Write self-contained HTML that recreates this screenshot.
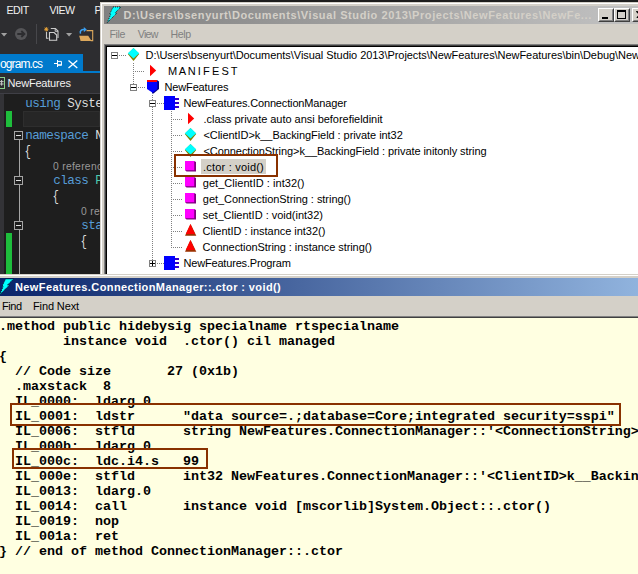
<!DOCTYPE html>
<html>
<head>
<meta charset="utf-8">
<title>ILDASM</title>
<style>
html,body{margin:0;padding:0;}
body{width:638px;height:574px;overflow:hidden;position:relative;background:#1e1e1e;font-family:"Liberation Sans",sans-serif;}
.abs{position:absolute;}
/* ---------- Visual Studio (left/top) ---------- */
#vs{position:absolute;left:0;top:0;width:100px;height:274px;background:#2d2d30;overflow:hidden;}
#vs .menu{position:absolute;top:2px;height:16px;line-height:16px;font-size:10.6px;letter-spacing:-0.5px;color:#f1f1f1;white-space:nowrap;}
#vs .tab{position:absolute;left:0;top:54px;width:83px;height:18px;background:#007acc;}
#vs .tabline{position:absolute;left:0;top:71px;width:100px;height:2px;background:#007acc;}
#vs .tabtxt{position:absolute;left:0px;top:55.5px;height:16px;line-height:16px;font-size:12px;letter-spacing:-0.9px;color:#fff;white-space:nowrap;}
#vs .nav{position:absolute;left:0;top:73px;width:100px;height:20px;background:#2d2d30;}
#vs .navtxt{position:absolute;left:7.5px;top:75px;height:16px;line-height:16px;font-size:11px;letter-spacing:-0.2px;color:#f1f1f1;white-space:nowrap;}
#vs .ed{position:absolute;left:4px;top:94px;width:96px;height:180px;background:#1e1e1e;}
#vs .margin{position:absolute;left:0;top:94px;width:4px;height:180px;background:#333337;}
#vs .sep{position:absolute;left:0;top:93px;width:100px;height:1px;background:#3f3f46;}
.code{position:absolute;font-family:"Liberation Mono",monospace;font-size:12.6px;letter-spacing:-0.56px;line-height:16px;height:16px;white-space:pre;color:#dcdcdc;}
.kw{color:#569cd6;}
.br{display:inline-block;transform:translate(-0.7px,0.9px) scale(0.85,1.1);transform-origin:30% 75%;}
.ty{color:#4ec9b0;}
.lens{position:absolute;letter-spacing:0.3px;font-size:10.3px;line-height:13px;height:13px;color:#999;white-space:pre;}
.green{position:absolute;left:6px;width:6px;background:#1ebe3c;}
.fold{position:absolute;left:14px;width:7px;height:7px;border:1px solid #a5a5a5;background:#1e1e1e;}
.fold:after{content:"";position:absolute;left:1px;top:3px;width:5px;height:1px;background:#e0e0e0;}
.fline{position:absolute;left:19px;width:1px;background:#a5a5a5;}
/* ---------- ILDASM main window ---------- */
#ild{position:absolute;left:100px;top:2px;width:540px;height:272px;background:#d4d0c8;overflow:hidden;}
#ild .b1{position:absolute;left:1px;top:1px;width:540px;height:1px;background:#fff;}
#ild .b2{position:absolute;left:1px;top:1px;width:1px;height:272px;background:#fff;}
#ild .title{position:absolute;left:4px;top:4px;width:536px;height:18px;background:linear-gradient(to right,#808080 0,#c0c0c0 515px);}
#ild .ttxt{position:absolute;left:23.5px;top:5px;height:16px;line-height:16px;font-size:11px;letter-spacing:0.59px;font-weight:bold;color:#d4d0c8;white-space:nowrap;}
#ild .mtxt{position:absolute;top:24px;height:16px;line-height:16px;font-size:10.6px;color:#808080;white-space:nowrap;}
#tree{position:absolute;left:4px;top:42px;width:540px;height:232px;background:#fff;border-left:1px solid #808080;border-top:1px solid #808080;}
#tree .in{position:absolute;left:0;top:0;width:540px;height:232px;border-left:1px solid #404040;border-top:1px solid #404040;}
#tree .in2{position:absolute;left:0;top:0;width:540px;height:232px;border-left:1px solid #000;border-top:1px solid #000;}
.row{position:absolute;font-size:11px;line-height:16px;height:16px;white-space:nowrap;color:#000;}
.wbtn{position:absolute;top:6px;width:16px;height:14px;background:#d4d0c8;box-sizing:border-box;border:1px solid;border-color:#fff #404040 #404040 #fff;}
.wbtn i{position:absolute;left:0;top:0;right:0;bottom:0;border:1px solid;border-color:#d4d0c8 #808080 #808080 #d4d0c8;}
/* ---------- IL method window ---------- */
#ilw{position:absolute;left:0;top:274px;width:638px;height:300px;background:#d4d0c8;overflow:hidden;}
#ilw .title{position:absolute;left:0;top:4px;width:740px;height:18px;background:linear-gradient(to right,#0a246a,#a6caf0);}
#ilw .ttxt{position:absolute;left:15px;top:5px;height:16px;line-height:16px;font-size:11px;letter-spacing:0.4px;font-weight:bold;color:#fff;white-space:nowrap;}
#ilw .mtxt{position:absolute;top:24px;height:16px;line-height:16px;font-size:11px;color:#000;white-space:nowrap;}
#ilt{position:absolute;left:0;top:44px;width:638px;height:256px;background:#ffffe1;}
#ilt pre{position:absolute;left:-1px;top:1px;margin:0;font-family:"Liberation Mono",monospace;font-weight:bold;font-size:13.33px;line-height:15px;color:#000;white-space:pre;}
.hl{position:absolute;box-sizing:border-box;border:2px solid #893100;}
</style>
</head>
<body>
<!-- Visual Studio -->
<div id="vs">
  <div class="menu" style="left:6.5px">EDIT</div>
  <div class="menu" style="left:49.5px">VIEW</div>
  <div class="menu" style="left:94.6px">P</div>
  <svg class="abs" style="left:0;top:22px" width="100" height="26" viewBox="0 22 100 26">
    <polygon points="1,33 7.2,33 4.1,36.4" fill="#a0a0a0"/>
    <circle cx="21.1" cy="34" r="6.1" fill="#555558"/>
    <path d="M17.3 34h6.2M21.3 31l3.1 3l-3.1 3" fill="none" stroke="#2d2d30" stroke-width="1.9"/>
    <rect x="36" y="24" width="1" height="20" fill="#47474b"/>
    <!-- new item icon -->
    <path d="M46.3 27v4.6M44.2 29.3h4.2M44.8 27.7l3 3.2M47.8 27.7l-3 3.2" stroke="#f0a93a" stroke-width="0.9" fill="none"/>
    <path d="M50.8 28.5h4.6l2.6 2.6v7" fill="none" stroke="#c8c8c8" stroke-width="1.1"/>
    <path d="M55.2 28.5v2.8h2.8" fill="none" stroke="#c8c8c8" stroke-width="1"/>
    <path d="M46.5 32v6.2h2" fill="none" stroke="#c8c8c8" stroke-width="1.1"/>
    <path d="M49.5 32.5h4.6l2.6 2.6v5.2h-7.2z" fill="#2a2a2d" stroke="#d0d0d0" stroke-width="1.1"/>
    <polygon points="66,33 72.2,33 69.1,36.4" fill="#a0a0a0"/>
    <!-- open folder icon -->
    <path d="M86.5 30.6h6.2v10h-2" fill="none" stroke="#dca85c" stroke-width="1.1"/>
    <polygon points="79.2,35.8 88.2,35.8 91.6,40.9 80.6,40.9" fill="#dca85c"/>
    <path d="M80.6 33.6c-1.2-2.4 0.6-4.2 3.8-4" fill="none" stroke="#3a9ff0" stroke-width="1.5"/>
    <polygon points="83.8,27 86.8,29.6 83.8,32.2" fill="#3a9ff0"/>
  </svg>
  <div class="tab"></div><div class="tabline"></div>
  <div class="tabtxt">ogram.cs</div>
  <div class="nav"></div>
  <div class="navtxt">NewFeatures</div>
  <svg class="abs" style="left:48px;top:54px" width="40" height="20" viewBox="48 54 40 20">
    <path d="M54 63.5h3.5M57.5 60v7M58 61.4h3.4v3.6h-3.4" fill="none" stroke="#fff" stroke-width="1"/>
    <rect x="58" y="64.4" width="3.9" height="1.2" fill="#fff"/>
    <path d="M68.5 60.4l8.8 7.6M77.3 60.4l-8.8 7.6" fill="none" stroke="#fff" stroke-width="1.3"/>
  </svg>
  <div class="abs" style="left:-9px;top:77px;width:12px;height:10px;border:1px solid #8cd08c;box-sizing:content-box"></div>
  <svg class="abs" style="left:0;top:78px" width="4" height="10" viewBox="0 78 4 10"><path d="M1.6 80v5.6M-1 81.6h4.6M-1 84h4.6" stroke="#c8c8c8" stroke-width="1" fill="none"/></svg>
  <div class="sep"></div>
  <div class="margin"></div>
  <div class="ed"></div>
  <div class="abs" style="left:23px;top:111px;width:77px;height:16px;background:#262626;box-sizing:border-box;border:1px solid #2e2e2e;"></div>
  <div class="code" style="left:25.2px;top:96px"><span class="kw">using</span> System</div>
  <div class="code" style="left:25.2px;top:128.3px"><span class="kw">namespace</span> N</div>
  <div class="code" style="left:25.2px;top:144px"><span class="br">{</span></div>
  <div class="lens" style="left:53px;top:159.6px">0 references</div>
  <div class="code" style="left:53.2px;top:173.2px"><span class="kw">class</span> <span class="ty">P</span></div>
  <div class="code" style="left:53.2px;top:189px"><span class="br">{</span></div>
  <div class="lens" style="left:81px;top:204.6px">0 references</div>
  <div class="code" style="left:81.2px;top:218.3px"><span class="kw">static</span></div>
  <div class="code" style="left:81.2px;top:234px"><span class="br">{</span></div>
  <div class="green" style="top:111px;height:16px"></div>
  <div class="green" style="top:233px;height:41px"></div>
  <div class="fline" style="top:140px;height:134px"></div>
  <div class="fold" style="top:131px"></div>
  <div class="fold" style="top:176px"></div>
  <div class="fold" style="top:221px"></div>
</div>

<!-- ILDASM -->
<div id="ild">
  <div class="b1"></div><div class="b2"></div>
  <div class="title"></div>
  <div class="ttxt">D:\Users\bsenyurt\Documents\Visual Studio 2013\Projects\NewFeatures\NewFe...</div>
  <svg class="abs" style="left:4px;top:4px" width="20" height="18" viewBox="104 6 20 18"><polygon points="113,7 121,7 115,12.9 116.8,13.2 107.2,22.8 110.6,14.6 109.6,14.3" fill="#00ffff" stroke="#000" stroke-width="0.8" stroke-dasharray="1 1"/></svg>
  <div class="wbtn" style="left:498px"><i></i><b class="abs" style="left:3px;top:8px;width:6px;height:2px;background:#000"></b></div>
  <div class="wbtn" style="left:514px"><i></i><b class="abs" style="left:2px;top:1px;width:7px;height:6px;border:1px solid #000;border-top-width:2px"></b></div>
  <div class="wbtn" style="left:532px"><i></i><svg class="abs" style="left:3px;top:2px" width="8" height="7" viewBox="0 0 8 7"><path d="M0.5 0l6.5 7M7.5 0l-6.5 7" stroke="#000" stroke-width="1.6"/></svg></div>
  <div class="mtxt" style="left:9.5px;letter-spacing:-0.4px">File</div>
  <div class="mtxt" style="left:37.8px;letter-spacing:-0.7px">View</div>
  <div class="mtxt" style="left:70.6px;letter-spacing:-0.4px">Help</div>
  <div id="tree"><div class="in"><div class="in2"></div></div>
  </div>
</div>

<div id="treeclip" class="abs" style="left:107px;top:47px;width:531px;height:227px;overflow:hidden"><div class="abs" style="left:-107px;top:-47px;width:638px;height:274px">
<!--TREE-->
<svg class="abs" style="left:0;top:0" width="638" height="274" viewBox="0 0 638 274" shape-rendering="crispEdges">
<line x1="133.5" y1="63" x2="133.5" y2="84" stroke="#808080" stroke-dasharray="1 1"/>
<line x1="152.5" y1="95" x2="152.5" y2="100" stroke="#808080" stroke-dasharray="1 1"/>
<line x1="152.5" y1="107" x2="152.5" y2="260" stroke="#808080" stroke-dasharray="1 1"/>
<line x1="171.5" y1="111" x2="171.5" y2="248" stroke="#808080" stroke-dasharray="1 1"/>
<rect x="111.5" y="52.5" width="6" height="6" fill="#fff" stroke="#808080"/><rect x="112" y="55" width="5" height="1" fill="#000"/>
<line x1="119" y1="55.5" x2="126" y2="55.5" stroke="#808080" stroke-dasharray="1 1"/>
<polygon points="133.5,48 139.2,54 133.5,61 127.8,54" fill="#808000" shape-rendering="auto"/><polygon points="133.5,48 139.2,53.3 133.5,58.6 127.8,53.3" fill="#00ffff" shape-rendering="auto"/>
<line x1="135" y1="71.5" x2="144" y2="71.5" stroke="#808080" stroke-dasharray="1 1"/>
<polygon points="150,64.8 156.2,70.5 150,76.2" fill="#ff0000" shape-rendering="auto"/>
<line x1="138" y1="87.5" x2="145" y2="87.5" stroke="#808080" stroke-dasharray="1 1"/>
<rect x="130.5" y="84.5" width="6" height="6" fill="#fff" stroke="#808080"/><rect x="131" y="87" width="5" height="1" fill="#000"/>
<polygon points="157,80 159,81.5 159,89 153.5,93.6 152,93.6 152,82" fill="#000080" shape-rendering="auto"/><polygon points="147,82 157.3,82 157.3,89 152.6,92.8 147,89" fill="#0000ff" shape-rendering="auto"/><rect x="147" y="80" width="10.3" height="2" fill="#ff0000"/>
<line x1="157" y1="103.5" x2="164" y2="103.5" stroke="#808080" stroke-dasharray="1 1"/>
<rect x="149.5" y="100.5" width="6" height="6" fill="#fff" stroke="#808080"/><rect x="150" y="103" width="5" height="1" fill="#000"/>
<rect x="164" y="96" width="11" height="14" fill="#0000ff"/><rect x="175" y="98" width="4" height="2" fill="#3300cc"/><rect x="175" y="102" width="4" height="2" fill="#3300cc"/><rect x="175" y="106" width="4" height="2" fill="#3300cc"/>
<line x1="173" y1="119.5" x2="182" y2="119.5" stroke="#808080" stroke-dasharray="1 1"/>
<polygon points="188,112.8 194.2,118.5 188,124.2" fill="#ff0000" shape-rendering="auto"/>
<line x1="173" y1="135.5" x2="182" y2="135.5" stroke="#808080" stroke-dasharray="1 1"/>
<polygon points="190.5,128 196.2,134 190.5,141 184.8,134" fill="#808000" shape-rendering="auto"/><polygon points="190.5,128 196.2,133.3 190.5,138.6 184.8,133.3" fill="#00ffff" shape-rendering="auto"/>
<line x1="173" y1="151.5" x2="182" y2="151.5" stroke="#808080" stroke-dasharray="1 1"/>
<polygon points="190.5,144 196.2,150 190.5,157 184.8,150" fill="#808000" shape-rendering="auto"/><polygon points="190.5,144 196.2,149.3 190.5,154.6 184.8,149.3" fill="#00ffff" shape-rendering="auto"/>
<line x1="173" y1="167.5" x2="182" y2="167.5" stroke="#808080" stroke-dasharray="1 1"/>
<polygon points="185,161 194,161 196,162 196,171.6 186.5,171.6 185,170" fill="#800080" shape-rendering="auto"/><rect x="185" y="161" width="9.2" height="9.2" fill="#ff00ff" shape-rendering="auto"/>
<line x1="173" y1="183.5" x2="182" y2="183.5" stroke="#808080" stroke-dasharray="1 1"/>
<polygon points="185,177 194,177 196,178 196,187.6 186.5,187.6 185,186" fill="#800080" shape-rendering="auto"/><rect x="185" y="177" width="9.2" height="9.2" fill="#ff00ff" shape-rendering="auto"/>
<line x1="173" y1="199.5" x2="182" y2="199.5" stroke="#808080" stroke-dasharray="1 1"/>
<polygon points="185,193 194,193 196,194 196,203.6 186.5,203.6 185,202" fill="#800080" shape-rendering="auto"/><rect x="185" y="193" width="9.2" height="9.2" fill="#ff00ff" shape-rendering="auto"/>
<line x1="173" y1="215.5" x2="182" y2="215.5" stroke="#808080" stroke-dasharray="1 1"/>
<polygon points="185,209 194,209 196,210 196,219.6 186.5,219.6 185,218" fill="#800080" shape-rendering="auto"/><rect x="185" y="209" width="9.2" height="9.2" fill="#ff00ff" shape-rendering="auto"/>
<line x1="173" y1="231.5" x2="182" y2="231.5" stroke="#808080" stroke-dasharray="1 1"/>
<polygon points="190.6,224 196.3,235.8 185,235.8" fill="#9c3000" shape-rendering="auto"/><polygon points="190.4,224 195,234 185.8,234" fill="#ff0000" shape-rendering="auto"/>
<line x1="173" y1="247.5" x2="182" y2="247.5" stroke="#808080" stroke-dasharray="1 1"/>
<polygon points="190.6,240 196.3,251.8 185,251.8" fill="#9c3000" shape-rendering="auto"/><polygon points="190.4,240 195,250 185.8,250" fill="#ff0000" shape-rendering="auto"/>
<line x1="157" y1="263.5" x2="164" y2="263.5" stroke="#808080" stroke-dasharray="1 1"/>
<rect x="149.5" y="260.5" width="6" height="6" fill="#fff" stroke="#808080"/><rect x="150" y="263" width="5" height="1" fill="#000"/><rect x="152" y="261" width="1" height="5" fill="#000"/>
<rect x="164" y="256" width="11" height="14" fill="#0000ff"/><rect x="175" y="258" width="4" height="2" fill="#3300cc"/><rect x="175" y="262" width="4" height="2" fill="#3300cc"/><rect x="175" y="266" width="4" height="2" fill="#3300cc"/>
</svg>
<div class="abs" style="left:201px;top:159px;width:65px;height:15px;background:#d4d0c8"></div>
<div class="row" style="left:145.5px;top:47px;letter-spacing:-0.052px">D:\Users\bsenyurt\Documents\Visual Studio 2013\Projects\NewFeatures\NewFeatures\bin\Debug\NewFeatures.exe</div>
<div class="row" style="left:168px;top:63px;letter-spacing:-0.43px">M A N I F E S T</div>
<div class="row" style="left:164.5px;top:79px;letter-spacing:-0.147px">NewFeatures</div>
<div class="row" style="left:183.5px;top:95px;letter-spacing:-0.15px">NewFeatures.ConnectionManager</div>
<div class="row" style="left:203.5px;top:111px;letter-spacing:-0.032px">.class private auto ansi beforefieldinit</div>
<div class="row" style="left:203.5px;top:127px;letter-spacing:-0.063px">&lt;ClientID&gt;k__BackingField : private int32</div>
<div class="row" style="left:203.5px;top:143px;letter-spacing:-0.073px">&lt;ConnectionString&gt;k__BackingField : private initonly string</div>
<div class="row" style="left:203.0px;top:159px;letter-spacing:0.209px">.ctor : void()</div>
<div class="row" style="left:202.8px;top:175px;letter-spacing:0.037px">get_ClientID : int32()</div>
<div class="row" style="left:202.8px;top:191px;letter-spacing:-0.038px">get_ConnectionString : string()</div>
<div class="row" style="left:202.8px;top:207px;letter-spacing:-0.01px">set_ClientID : void(int32)</div>
<div class="row" style="left:202.6px;top:223px;letter-spacing:-0.03px">ClientID : instance int32()</div>
<div class="row" style="left:202.6px;top:239px;letter-spacing:-0.07px">ConnectionString : instance string()</div>
<div class="row" style="left:183.5px;top:255px;letter-spacing:-0.182px">NewFeatures.Program</div>
<div class="hl" style="left:174px;top:154px;width:104px;height:23px"></div>
<!--/TREE-->
</div></div>
<!-- IL window -->
<div id="ilw">
  <div class="abs" style="left:0;top:1px;width:638px;height:1px;background:#fff"></div>
  <div class="title"></div>
  <svg class="abs" style="left:0;top:4px" width="16" height="18" viewBox="107.5 6 16 18"><polygon points="113,7 121,7 115,12.9 116.8,13.2 107.2,22.8 110.6,14.6 109.6,14.3" fill="#00ffff" stroke="#000" stroke-width="0.8" stroke-dasharray="1 1"/></svg>
  <div class="ttxt">NewFeatures.ConnectionManager::.ctor : void()</div>
  <div class="mtxt" style="left:2px;letter-spacing:-0.4px">Find</div>
  <div class="mtxt" style="left:33px;letter-spacing:-0.12px">Find Next</div>
  <div class="abs" style="left:0;top:42px;width:638px;height:1px;background:#808080"></div>
  <div class="abs" style="left:0;top:43px;width:638px;height:1px;background:#404040"></div>
  <div id="ilt">
<pre>.method public hidebysig specialname rtspecialname
        instance void  .ctor() cil managed
{
  // Code size       27 (0x1b)
  .maxstack  8
  IL_0000:  ldarg.0
  IL_0001:  ldstr      "data source=.;database=Core;integrated security=sspi"
  IL_0006:  stfld      string NewFeatures.ConnectionManager::'&lt;ConnectionString&gt;k__BackingField'
  IL_000b:  ldarg.0
  IL_000c:  ldc.i4.s   99
  IL_000e:  stfld      int32 NewFeatures.ConnectionManager::'&lt;ClientID&gt;k__BackingField'
  IL_0013:  ldarg.0
  IL_0014:  call       instance void [mscorlib]System.Object::.ctor()
  IL_0019:  nop
  IL_001a:  ret
} // end of method ConnectionManager::.ctor</pre>
  </div>
</div>
<div class="hl" style="left:10px;top:403px;width:611px;height:23px"></div>
<div class="hl" style="left:12px;top:448px;width:196px;height:21px"></div>
</body>
</html>
